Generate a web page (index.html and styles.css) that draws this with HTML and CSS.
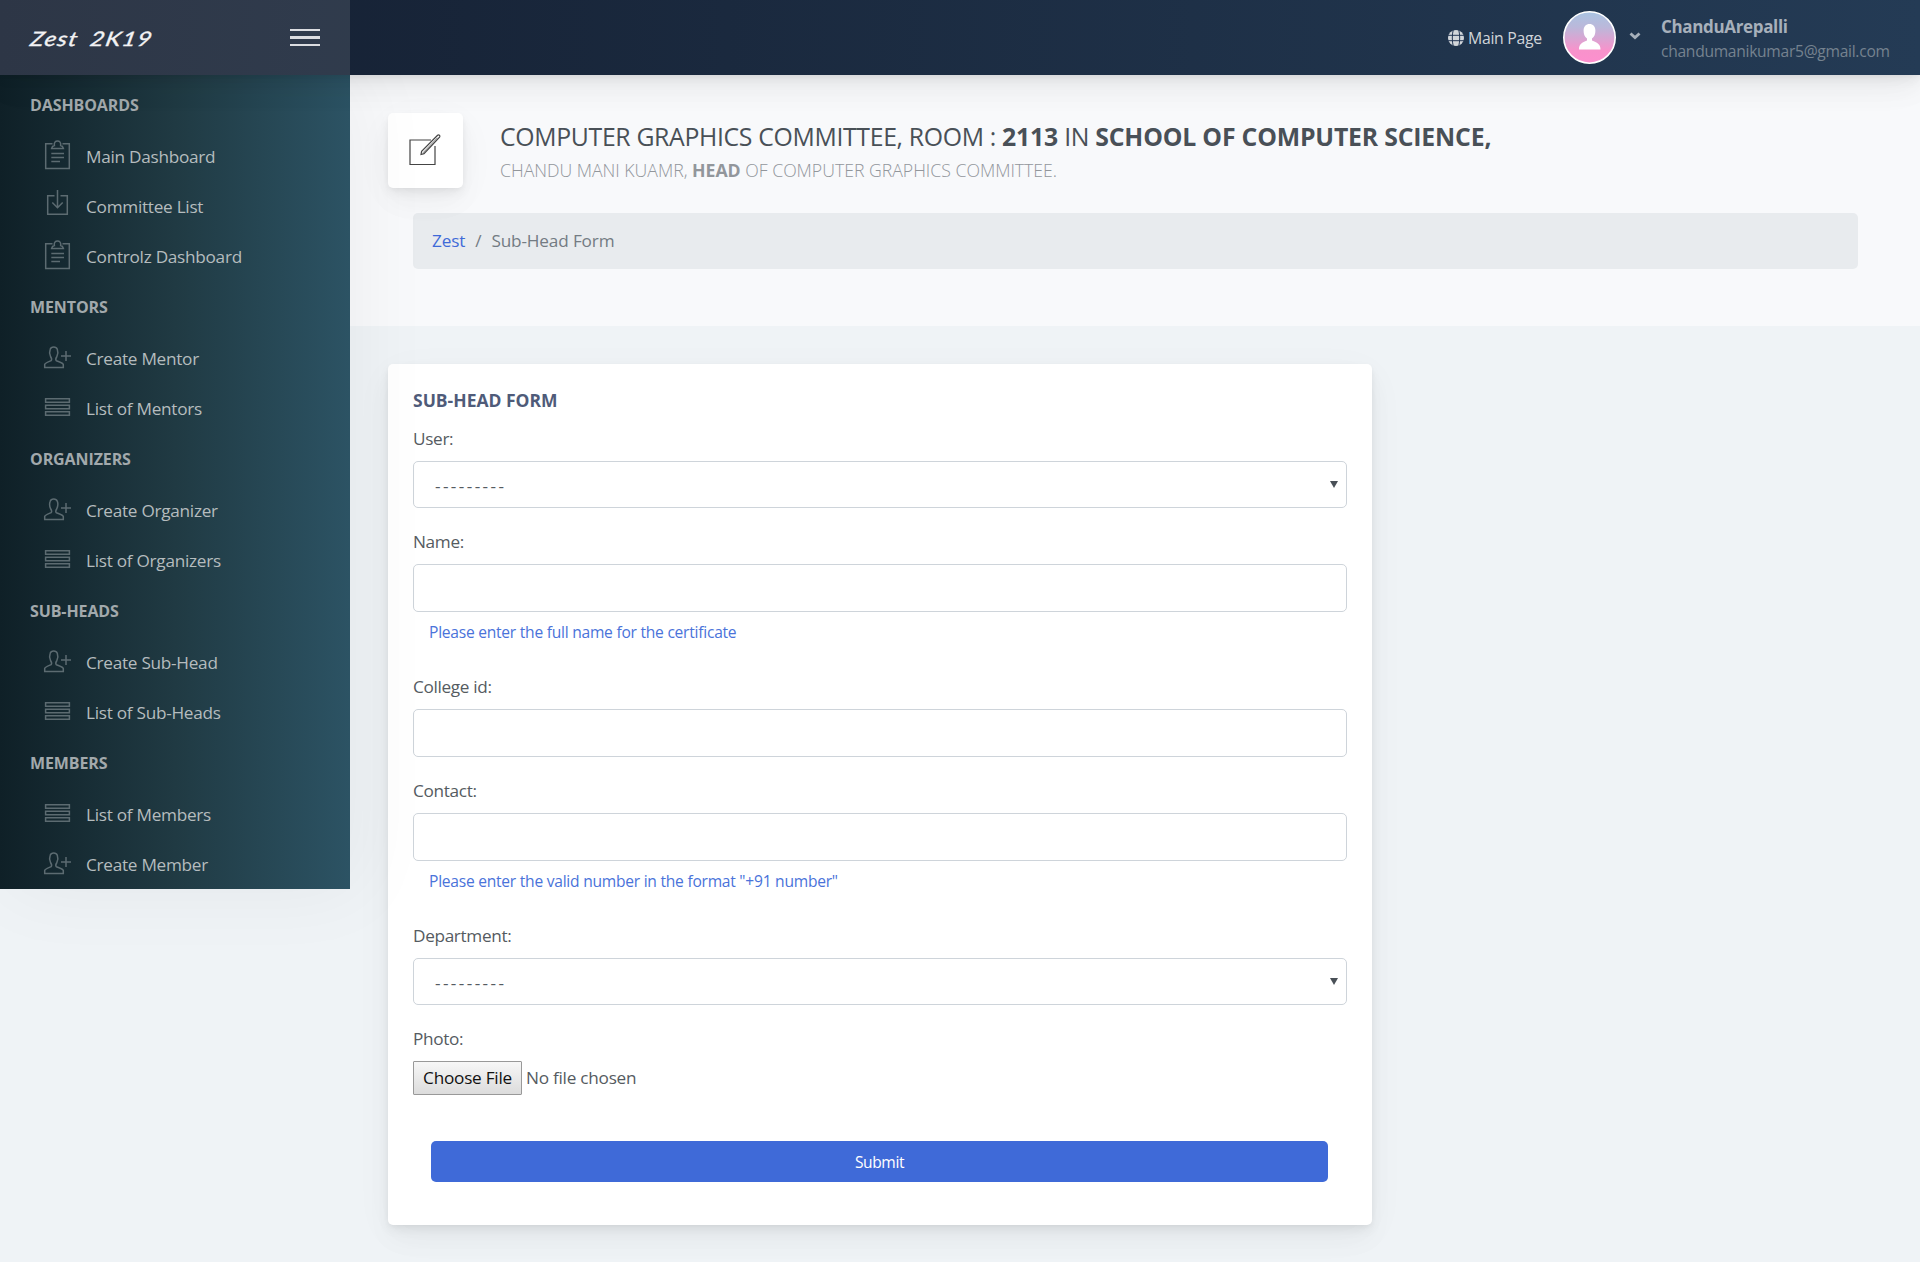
FILE: index.html
```
<!DOCTYPE html>
<html lang="en">
<head>
<meta charset="utf-8">
<title>Zest 2K19</title>
<link rel="stylesheet" href="styles.css">
</head>
<body>
<svg width="0" height="0" class="sprite">
  <symbol id="clipboard" viewBox="0 0 30 34"><path d="M9.5 4.7H2.7V29.5H26.3V4.7H19.5M8.6 9.5H20.4C20 7.8 19 6.8 17.6 6.6C18.2 3.4 16.6 2 14.5 2S10.8 3.4 11.4 6.6C10 6.8 9 7.8 8.600 9.500ZM8.300 14.500H21M8.300 18.500H21M8.300 22.500H17"/></symbol>
  <symbol id="download" viewBox="0 0 30 34"><path d="M11.500 6.700H4.700V25.300H24.300V6.700H17.500M14.500 1V19M9.300 13.500L14.500 18.700L19.700 13.500"/></symbol>
  <symbol id="person" viewBox="0 0 30 34"><path d="M1.700 26.500V23.500C2 21.800 6.500 20.500 8.200 19.600C9 18.500 8.500 17 7.600 15.700C6.600 13.500 6.500 10 7.200 8.200C8.200 5.200 13.200 5.200 14.300 8.200C15 10 14.800 13.500 13.800 15.700C12.900 17 12.400 18.500 13.200 19.600C14.800 20.500 20 21.800 20.300 23.500V26.500ZM18 15H28M23 10V20"/></symbol>
  <symbol id="list" viewBox="0 0 30 34"><path d="M2.600 7.700H26.400V11.200H2.600ZM2.600 14.300H26.400V17.700H2.600ZM2.600 20.800H26.400V24.300H2.600Z"/></symbol>
</svg>

<header class="header">
  <div class="brand">
    <span class="logo">Zest 2K19</span>
    <span class="burger"><i></i><i></i><i></i></span>
  </div>
  <div class="account">
    <a class="main-page">
      <svg width="16" height="16" viewBox="0 0 16 16"><circle cx="8" cy="8" r="8" fill="#d2d6da"/><path d="M0 5.300H16M0 10.700H16M5.200 0C4 5 4 11 5.200 16M10.800 0C12 5 12 11 10.800 16" stroke="#233754" fill="none"/></svg>
      <span>Main Page</span>
    </a>
    <svg class="avatar" width="53" height="53" viewBox="0 0 53 53">
      <defs><linearGradient id="av" x1="0" y1="0" x2="0" y2="1"><stop offset="0" stop-color="#a9c4e2"/><stop offset=".3" stop-color="#bbb8da"/><stop offset=".75" stop-color="#f892cb"/><stop offset="1" stop-color="#fd8fce"/></linearGradient></defs>
      <circle cx="26.500" cy="26.500" r="25.700" fill="url(#av)" stroke="#fff" stroke-width="1.600"/>
      <path fill="#fff" d="M16 38.500C16 33 19 31.500 24 29.500V27.500C21.500 26 20.600 23 20.600 19.500C20.600 15.500 23 13 26.500 13S32.400 15.500 32.400 19.500C32.400 23 31.500 26 29 27.500V29.500C34 31.500 37.500 33 37.500 38.500Z"/>
    </svg>
    <svg class="caret" width="12" height="8" viewBox="0 0 12 8"><path d="M1.500 1.500L6 5.500L10.500 1.500" fill="none" stroke="#a7b0bb" stroke-width="2.900"/></svg>
    <div class="who"><strong>ChanduArepalli</strong><span>chandumanikumar5@gmail.com</span></div>
  </div>
</header>

<div class="body">
  <nav class="sidebar">
    <h5>Dashboards</h5>
    <a><svg><use href="#clipboard"/></svg>Main Dashboard</a>
    <a><svg><use href="#download"/></svg>Committee List</a>
    <a><svg><use href="#clipboard"/></svg>Controlz Dashboard</a>
    <h5>Mentors</h5>
    <a><svg><use href="#person"/></svg>Create Mentor</a>
    <a><svg><use href="#list"/></svg>List of Mentors</a>
    <h5>Organizers</h5>
    <a><svg><use href="#person"/></svg>Create Organizer</a>
    <a><svg><use href="#list"/></svg>List of Organizers</a>
    <h5>Sub-Heads</h5>
    <a><svg><use href="#person"/></svg>Create Sub-Head</a>
    <a><svg><use href="#list"/></svg>List of Sub-Heads</a>
    <h5>Members</h5>
    <a><svg><use href="#list"/></svg>List of Members</a>
    <a><svg><use href="#person"/></svg>Create Member</a>
  </nav>

  <main class="content">
    <section class="page-title">
      <div class="heading">
        <div class="heading-icon">
          <svg width="75" height="75" viewBox="0 0 75 75" fill="none" stroke="#444" stroke-width="1.200"><path d="M43 27H22V51.500H47V33"/><path d="M33 41.500L33.600 38.300L49.600 22.300C50.800 21.200 52.600 22.800 51.600 24.200L36 40.600Z"/><path stroke-width=".7" d="M35 39.800L49.500 24.800"/></svg>
        </div>
        <div>
          <h1>COMPUTER GRAPHICS COMMITTEE, ROOM : <b>2113</b> IN <b>SCHOOL OF COMPUTER SCIENCE,</b></h1>
          <p class="sub">CHANDU MANI KUAMR, <b>HEAD</b> OF COMPUTER GRAPHICS COMMITTEE.</p>
        </div>
      </div>
      <div class="breadcrumb"><a>Zest</a><span class="sep">/</span><span>Sub-Head Form</span></div>
    </section>

    <form class="card">
      <h2>SUB-HEAD FORM</h2>
      <label>User:</label>
      <div class="control select"><span>---------</span><i></i></div>
      <label>Name:</label>
      <input class="control" type="text">
      <small>Please enter the full name for the certificate</small>
      <label>College id:</label>
      <input class="control" type="text">
      <label>Contact:</label>
      <input class="control" type="text">
      <small>Please enter the valid number in the format "+91 number"</small>
      <label>Department:</label>
      <div class="control select"><span>---------</span><i></i></div>
      <label>Photo:</label>
      <div class="file"><button type="button">Choose File</button><span>No file chosen</span></div>
      <button class="submit" type="button">Submit</button>
    </form>
  </main>
</div>
</body>
</html>
```
FILE: styles.css
```
* { box-sizing: border-box; }
body {
  margin: 0;
  height: 1262px;
  overflow: hidden;
  display: flex;
  flex-direction: column;
  background: #eff3f6;
  font: 400 17.200px/26px "Open Sans", "Noto Sans", sans-serif;
  letter-spacing: -.25px;
  color: #555b61;
}
.sprite { position: absolute; }
h1, h2, h5, p { margin: 0; }
b { font-weight: 700; }

.header {
  flex: none;
  position: relative;
  z-index: 3;
  height: 75px;
  display: flex;
  justify-content: space-between;
  background: linear-gradient(to right, #141e30, #243b55);
  box-shadow: 0 9px 44px rgba(4,9,20,.04), 0 15px 28px rgba(4,9,20,.04), 0 5px 11px rgba(4,9,20,.05), 0 2px 4px rgba(4,9,20,.03);
}
.brand {
  width: 350px;
  padding: 0 30px;
  display: flex;
  align-items: center;
  justify-content: space-between;
  background: rgba(255,255,255,.11);
}
.logo {
  color: #f2f2f4;
  font: italic 400 20px/24px Lato, sans-serif;
  letter-spacing: 1px;
  word-spacing: 4px;
  -webkit-text-stroke: .35px #f2f2f4;
  transform: translateX(1px) scaleX(1.220) skewX(-10deg);
  transform-origin: 0 50%;
}
.burger { display: grid; gap: 5px; }
.burger i { width: 30px; height: 2.500px; background: #dcdde1; }
.account { display: flex; align-items: center; color: #d0d4d9; padding-right: 30px; }
.main-page { display: flex; align-items: center; font-size: 15.800px; letter-spacing: -.3px; padding-top: 1px; }
.main-page span { margin-left: 4px; width: 74px; white-space: nowrap; }
.avatar { margin-left: 21px; }
.caret { margin: 0 20px 4px 13px; }
.who { width: 229px; display: flex; flex-direction: column; line-height: 25px; padding-top: 2px; }
.who strong { font-size: 17px; letter-spacing: -.35px; color: #a7b0bb; }
.who span { font-size: 15.600px; letter-spacing: -.28px; color: #75828f; }

.body { flex: 1; display: flex; align-items: flex-start; min-height: 0; }
.sidebar {
  flex: none;
  position: relative;
  z-index: 2;
  width: 350px;
  height: 814px;
  padding-top: 5px;
  background: linear-gradient(to right, #0f2027, #203a43, #2c5364);
  box-shadow: 9px 0 75px rgba(0,0,0,.05);
  color: #b5bcbe;
}
.sidebar h5 { height: 52px; padding: 0 30px; font: 700 16px/50px "Open Sans", sans-serif; letter-spacing: -.1px; text-transform: uppercase; color: #a2a9ac; }
.sidebar a { height: 50px; padding-left: 43px; display: flex; align-items: center; gap: 13px; letter-spacing: -.27px; }
.sidebar svg { width: 30px; height: 34px; margin-top: -3px; fill: none; stroke: #5c6b71; stroke-width: 1.500; }

.content { flex: 1; }
.page-title { height: 251px; padding: 38px 38px 0; background: #f8f9fb; }
.heading { display: flex; gap: 37px; }
.heading-icon {
  width: 75px; height: 75px; background: #fff; border-radius: 5px;
  box-shadow: 0 9px 44px rgba(4,9,20,.03), 0 15px 28px rgba(4,9,20,.03), 0 5px 11px rgba(4,9,20,.05), 0 2px 4px rgba(4,9,20,.03);
}
h1 { font-size: 24.800px; font-weight: 380; letter-spacing: -.33px; line-height: 34px; padding-top: 6px; white-space: nowrap; color: #495057; }
h1 b { letter-spacing: -.18px; }
.sub { font-size: 17.700px; font-weight: 350; letter-spacing: -.02px; line-height: 30px; padding-top: 2px; color: #92969b; }
.breadcrumb { margin: 25px 24px 0 25px; height: 56px; padding: 0 0 0 19px; display: flex; align-items: center; background: #e8ebee; border-radius: 5px; color: #737b83; letter-spacing: -.15px; }
.breadcrumb a { color: #3f6ad8; }
.sep { margin: 0 10px; }

.card {
  width: 984px; height: 861px; margin: 38px 0 0 38px; padding: 23px 25px;
  display: flex; flex-direction: column; background: #fff; border-radius: 5px;
  box-shadow: 0 9px 44px rgba(4,9,20,.03), 0 15px 28px rgba(4,9,20,.03), 0 5px 11px rgba(4,9,20,.05), 0 2px 4px rgba(4,9,20,.03);
}
h2 { font-size: 17.500px; font-weight: 700; letter-spacing: 0; line-height: 26px; color: #4f5b79; }
label { height: 26px; margin: 29px 0 9px; flex: none; line-height: 26px; letter-spacing: -.33px; }
h2 + label { margin-top: 13px; }
.control { flex: none; width: 100%; height: 48px; border: 1px solid #ced4da; border-radius: 5px; background: #fff; font: inherit; color: inherit; }
.control + label { margin-top: 21px; }
.select { height: 47px; display: flex; align-items: center; justify-content: space-between; padding: 0 8px 0 21px; letter-spacing: 2.400px; }
.select span { padding-top: 2px; }
.select i { border: 4px solid transparent; border-top: 7px solid #495057; border-bottom: 0; }
small { font-size: 15.600px; letter-spacing: -.25px; line-height: 24px; height: 24px; margin: 8px 0 1px 16px; color: #4a73da; }
.file { display: flex; align-items: center; height: 34px; }
.file button { width: 109px; height: 34px; padding: 0; margin-right: 4px; border: 1px solid #999; border-radius: 1px; background: linear-gradient(#f7f7f7, #dcdcdc); font: inherit; letter-spacing: inherit; color: #111; }
.submit { flex: none; margin: 46px 19px 0 18px; height: 41px; border: 0; border-radius: 5px; background: #3f6ad8; color: #fff; font: 500 15.600px/22px "Open Sans", sans-serif; letter-spacing: -.4px; }
```
